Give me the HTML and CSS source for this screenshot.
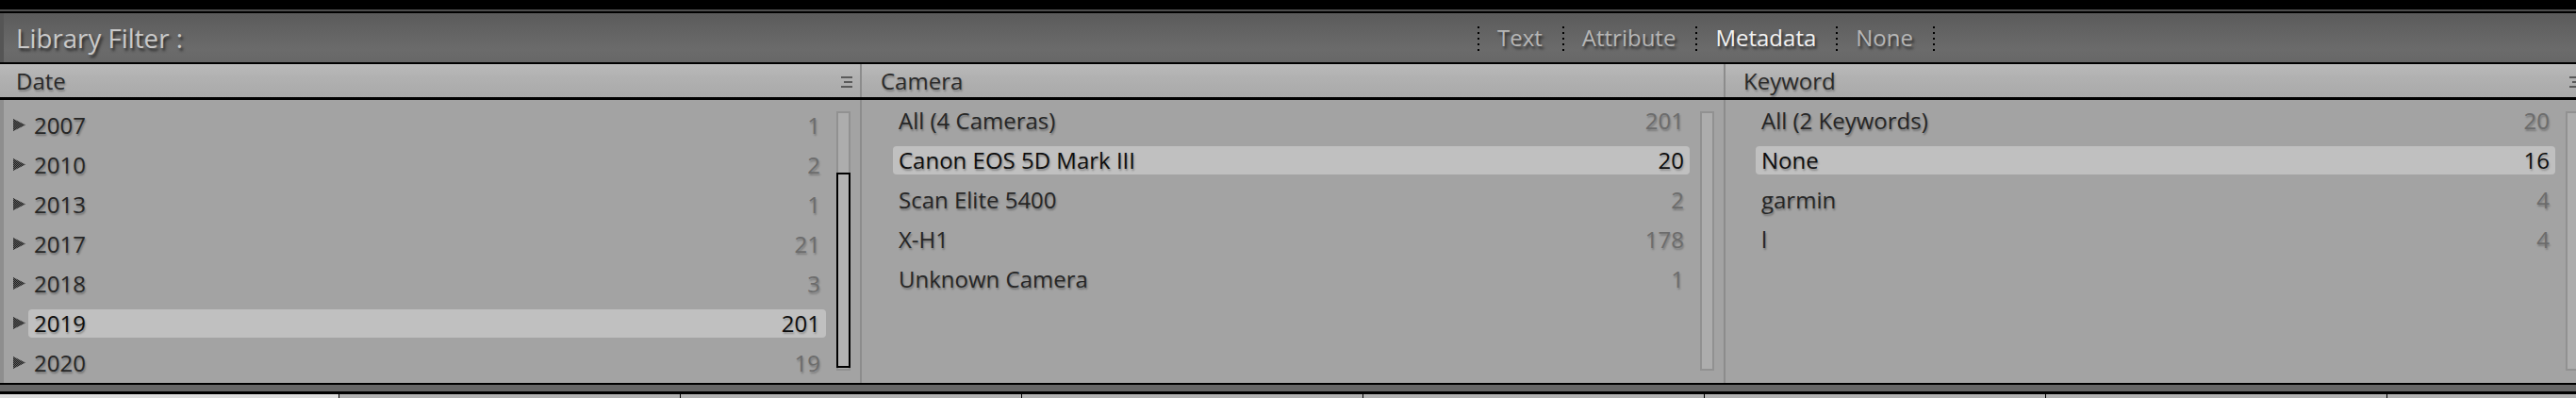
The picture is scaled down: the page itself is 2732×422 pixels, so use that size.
FILE: index.html
```html
<!DOCTYPE html>
<html lang="en">
<head>
<meta charset="utf-8">
<title>Library Filter</title>
<link rel="stylesheet" href="styles.css">
</head>
<body>
<svg class="defs" width="0" height="0" aria-hidden="true">
  <defs>
    <pattern id="dith" width="2" height="2" patternUnits="userSpaceOnUse">
      <rect width="2" height="2" fill="#5c5c5c"/>
      <rect width="1" height="1" fill="#222222"/>
      <rect x="1" y="1" width="1" height="1" fill="#222222"/>
    </pattern>
  </defs>
</svg>
<div class="app">
  <div class="top-black"></div>
  <div class="top-line"></div>
  <div class="rule rule-2"></div>

  <div class="filterbar">
    <span class="title">Library Filter :</span>
    <nav class="modes">
      <span class="sep"></span><span class="mode">Text</span>
      <span class="sep"></span><span class="mode">Attribute</span>
      <span class="sep"></span><span class="mode active">Metadata</span>
      <span class="sep"></span><span class="mode">None</span>
      <span class="sep"></span>
    </nav>
  </div>
  <div class="rule rule-2"></div>

  <div class="browser">
    <div class="head head-date"><span>Date</span>
      <svg class="menu" width="12" height="12" viewBox="0 0 12 12"><rect x="0" y="0" width="12" height="2"/><rect x="3" y="5" width="9" height="2"/><rect x="0" y="10" width="12" height="2"/></svg>
    </div>
    <div class="head head-camera"><span>Camera</span></div>
    <div class="head head-keyword"><span>Keyword</span>
      <svg class="menu" width="12" height="12" viewBox="0 0 12 12"><rect x="0" y="0" width="12" height="2"/><rect x="3" y="5" width="9" height="2"/><rect x="0" y="10" width="12" height="2"/></svg>
    </div>

    <div class="head-rule"></div>

    <div class="body body-date">
      <ul class="rows">
        <li class="row"><svg class="tri" width="13" height="13" viewBox="0 0 13 13"><polygon points="0,0 13,6.5 0,13" fill="url(#dith)"/></svg><div class="item"><span class="name">2007</span><span class="count">1</span></div></li>
        <li class="row"><svg class="tri" width="13" height="13" viewBox="0 0 13 13"><polygon points="0,0 13,6.5 0,13" fill="url(#dith)"/></svg><div class="item"><span class="name">2010</span><span class="count">2</span></div></li>
        <li class="row"><svg class="tri" width="13" height="13" viewBox="0 0 13 13"><polygon points="0,0 13,6.5 0,13" fill="url(#dith)"/></svg><div class="item"><span class="name">2013</span><span class="count">1</span></div></li>
        <li class="row"><svg class="tri" width="13" height="13" viewBox="0 0 13 13"><polygon points="0,0 13,6.5 0,13" fill="url(#dith)"/></svg><div class="item"><span class="name">2017</span><span class="count">21</span></div></li>
        <li class="row"><svg class="tri" width="13" height="13" viewBox="0 0 13 13"><polygon points="0,0 13,6.5 0,13" fill="url(#dith)"/></svg><div class="item"><span class="name">2018</span><span class="count">3</span></div></li>
        <li class="row"><svg class="tri" width="13" height="13" viewBox="0 0 13 13"><polygon points="0,0 13,6.5 0,13" fill="url(#dith)"/></svg><div class="item sel"><span class="name">2019</span><span class="count">201</span></div></li>
        <li class="row"><svg class="tri" width="13" height="13" viewBox="0 0 13 13"><polygon points="0,0 13,6.5 0,13" fill="url(#dith)"/></svg><div class="item"><span class="name">2020</span><span class="count">19</span></div></li>
      </ul>
      <div class="track"><div class="thumb"></div></div>
    </div>

    <div class="body body-camera">
      <ul class="rows">
        <li class="row"><div class="item"><span class="name">All (4 Cameras)</span><span class="count">201</span></div></li>
        <li class="row"><div class="item sel"><span class="name">Canon EOS 5D Mark III</span><span class="count">20</span></div></li>
        <li class="row"><div class="item"><span class="name">Scan Elite 5400</span><span class="count">2</span></div></li>
        <li class="row"><div class="item"><span class="name">X-H1</span><span class="count">178</span></div></li>
        <li class="row"><div class="item"><span class="name">Unknown Camera</span><span class="count">1</span></div></li>
      </ul>
      <div class="track"></div>
    </div>

    <div class="body body-keyword">
      <ul class="rows">
        <li class="row"><div class="item"><span class="name">All (2 Keywords)</span><span class="count">20</span></div></li>
        <li class="row"><div class="item sel"><span class="name">None</span><span class="count">16</span></div></li>
        <li class="row"><div class="item"><span class="name">garmin</span><span class="count">4</span></div></li>
        <li class="row"><div class="item"><span class="name">l</span><span class="count">4</span></div></li>
      </ul>
      <div class="track"></div>
    </div>
  </div>

  <div class="rule rule-2"></div>
  <div class="strip"></div>
  <div class="rule rule-3"></div>
  <div class="tabs">
    <div class="tab first"></div>
    <div class="tab"></div>
    <div class="tab"></div>
    <div class="tab"></div>
    <div class="tab"></div>
    <div class="tab"></div>
    <div class="tab"></div>
    <div class="tab"></div>
  </div>
</div>
</body>
</html>
```
FILE: styles.css
```css
html, body {
  margin: 0;
  padding: 0;
  background: #000;
  overflow: hidden;
}

body {
  width: 2732px;
  height: 422px;
  font-family: "Open Sans", "Noto Sans", "Liberation Sans", sans-serif;
}

.defs {
  display: block;
  width: 0;
  height: 0;
}

.app {
  width: 2746px;
}

.top-black {
  height: 10px;
  background: #000;
}

.top-line {
  height: 2px;
  background: #4d4d4d;
}

.rule {
  background: #000;
}
.rule-2 { height: 2px; }
.rule-3 { height: 3px; }

/* ---------- filter bar ---------- */
.filterbar {
  height: 52px;
  display: grid;
  grid-template-columns: 1567px auto;
  align-items: center;
  background: linear-gradient(#5b5b5b 0%, #656565 45%, #6b6b6b 75%, #676767 100%);
  box-shadow: inset 4px 0 #555555;
}

.title {
  padding-left: 17px;
  font-size: 27.7px;
  color: #c9c9c9;
  text-shadow: 2px 3px 3px rgba(0, 0, 0, 0.6);
  line-height: 1;
  padding-top: 2px;
}

.modes {
  display: flex;
  align-items: center;
  height: 52px;
}

.sep {
  width: 2px;
  height: 27px;
  margin-top: 2px;
  background: repeating-linear-gradient(to bottom, #000 0 2px, transparent 2px 6px);
}

.mode {
  padding: 0 21px 0 19px;
  font-size: 24px;
  color: #b6b6b6;
  text-shadow: 2px 3px 3px rgba(0, 0, 0, 0.55);
  line-height: 1;
}

.mode.active {
  color: #f2f2f2;
}

/* ---------- column browser ---------- */
.browser {
  display: grid;
  grid-template-columns: 914px 916px 916px;
  grid-template-rows: 35px 3px 300px;
}

.head {
  display: flex;
  align-items: center;
  justify-content: space-between;
  background: linear-gradient(#bababa 0%, #b1b1b1 40%, #a9a9a9 100%);
  border-right: 2px solid #8c8c8c;
  font-size: 24px;
  color: #2a2a2a;
  text-shadow: 1px 2px 2px rgba(0, 0, 0, 0.28);
}

.head-date { padding: 0 8px 0 17px; }
.head-camera { padding: 0 8px 0 20px; }
.head-keyword { padding: 0 9px 0 19px; border-right: none; }

.menu {
  fill: #5a5a5a;
  margin-top: 3px;
}

.head-rule {
  grid-column: 1 / -1;
  background: #000;
}

.body {
  display: flex;
  align-items: flex-start;
  gap: 11px;
  background: #a3a3a3;
  border-right: 2px solid #8c8c8c;
  overflow: hidden;
}

.body-date {
  padding: 0 10px 0 14px;
  box-shadow: inset 4px 0 #8e8e8e;
}
.body-camera { padding: 0 10px 0 33px; }
.body-keyword { padding: 0 10px 0 32px; border-right: none; }

.rows {
  flex: 1;
  list-style: none;
  margin: 0;
  padding: 1px 0 0 0;
}

.body-date .rows {
  padding-top: 6px;
}

.row {
  display: flex;
  align-items: center;
  height: 42px;
}

.tri {
  flex: none;
  margin-right: 3px;
  margin-top: -2px;
}

.item {
  flex: 1;
  height: 30px;
  display: flex;
  align-items: center;
  justify-content: space-between;
  padding: 0 6px;
  border-radius: 4px;
  font-size: 24px;
  line-height: 1;
}

.item .name {
  color: #262626;
  text-shadow: 1px 2px 2px rgba(0, 0, 0, 0.3);
}

.item .count {
  color: #6c6c6c;
  text-shadow: 1px 2px 2px rgba(0, 0, 0, 0.25);
}

.item.sel {
  background: #c0c0c0;
}

.item.sel .name,
.item.sel .count {
  color: #0e0e0e;
}

/* scrollbar */
.track {
  flex: none;
  position: relative;
  box-sizing: border-box;
  width: 15px;
  height: 275px;
  margin-top: 12px;
  background: #adadad;
  border: 2px solid #919191;
}

.thumb {
  position: absolute;
  left: -2px;
  right: -2px;
  top: 63px;
  height: 207px;
  box-sizing: border-box;
  border: 2px solid #000;
  background: #b3b3b3;
}

/* ---------- bottom ---------- */
.strip {
  height: 7px;
  background: #676767;
}

.tabs {
  display: flex;
  height: 20px;
}

.tab {
  flex: none;
  box-sizing: border-box;
  width: 362px;
  border-right: 1px solid #000;
  background: linear-gradient(#b4b4b4, #a6a6a6);
}

.tab.first {
  width: 360px;
  background: linear-gradient(#e0e0e0, #d2d2d2);
}
```
